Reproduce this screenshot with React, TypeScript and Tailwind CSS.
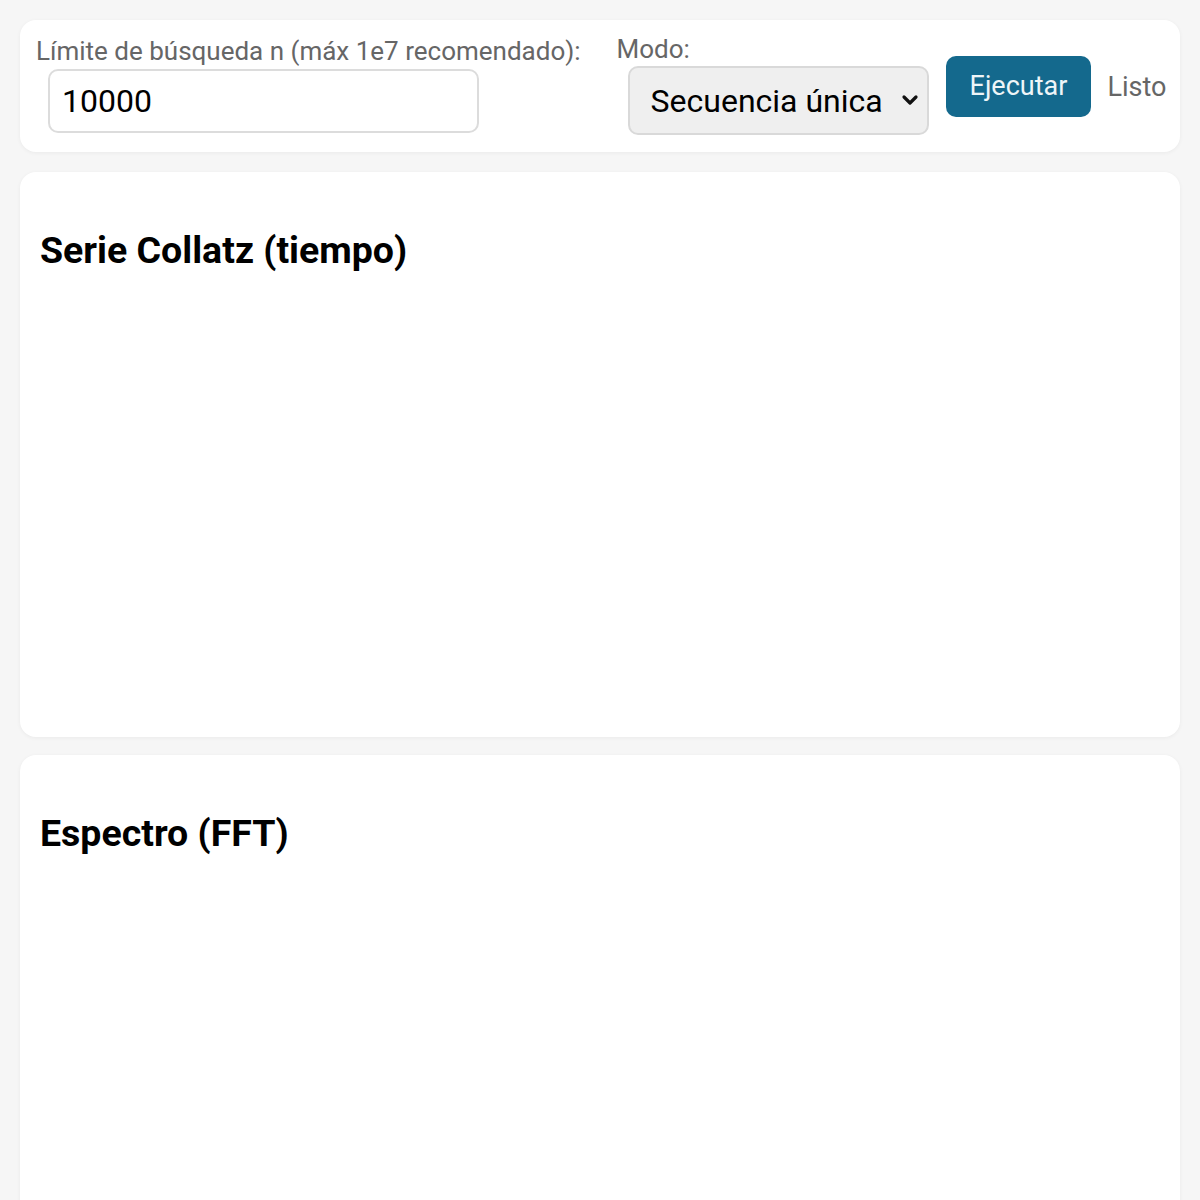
import { useState } from "react";

const Card = ({ title, className = "" }: { title: string; className?: string }) => (
  <section className={`bg-white rounded-2xl shadow-[0_1px_4px_rgba(0,0,0,0.05)] h-[565px] px-5 pt-[57px] ${className}`}>
    <h2 className="text-[37.5px] font-bold leading-[1.17] text-black">{title}</h2>
  </section>
);

export default function App() {
  const [limit, setLimit] = useState("10000");
  const [mode, setMode] = useState("single");

  return (
    <div className="min-h-screen bg-[#f6f6f6] p-5 flex flex-col font-['Roboto',sans-serif]">
      <div className="bg-white rounded-2xl shadow-[0_1px_4px_rgba(0,0,0,0.05)] px-4 pt-[14px] pb-[17px] flex items-center whitespace-nowrap">
        <label className="flex flex-col shrink-0 mr-[36px]">
          <span className="text-[26px] leading-[1.17] text-[#666]">Límite de búsqueda n (máx 1e7 recomendado):</span>
          <input
            value={limit}
            onChange={(e) => setLimit(e.target.value)}
            className="mt-[3px] ml-3 w-[431px] h-[64px] border-2 border-[#dcdcdc] rounded-[10px] px-3 text-[32px] text-black outline-none"
          />
        </label>
        <label className="flex flex-col shrink-0 mr-[17px]">
          <span className="text-[26px] leading-[1.17] text-[#666]">Modo:</span>
          <div className="relative mt-[2px] ml-[11px]">
            <select
              value={mode}
              onChange={(e) => setMode(e.target.value)}
              className="appearance-none w-[301px] h-[69px] bg-[#efefef] border-2 border-[#d9d9d9] rounded-[10px] pl-[21px] text-[32px] text-black outline-none"
            >
              <option value="single">Secuencia única</option>
              <option value="range">Rango completo</option>
            </select>
            <svg className="absolute right-[10px] top-[28px] pointer-events-none" width="18" height="12" viewBox="0 0 18 12">
              <polyline points="3,3 9,9 15,3" fill="none" stroke="#111" strokeWidth="3.2" strokeLinecap="round" strokeLinejoin="round" />
            </svg>
          </div>
        </label>
        <button className="shrink-0 mt-1 h-[61px] px-[24px] rounded-[10px] bg-[#14698d] text-[27px] text-[#eef5f8] mr-4">Ejecutar</button>
        <span className="shrink-0 mt-[6px] text-[27px] text-[#666]">Listo</span>
      </div>
      <Card title="Serie Collatz (tiempo)" className="mt-5" />
      <Card title="Espectro (FFT)" className="mt-[18px]" />
    </div>
  );
}
